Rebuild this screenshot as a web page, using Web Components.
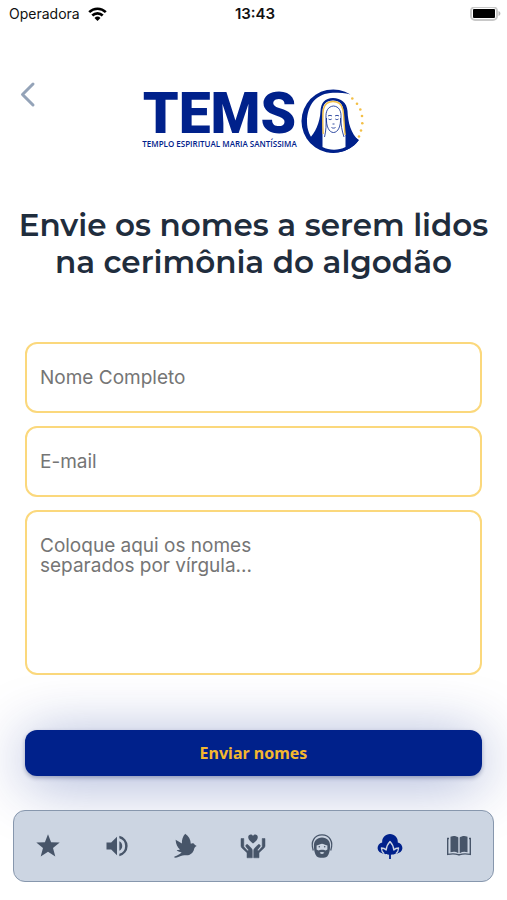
<!DOCTYPE html>
<html lang="pt-BR">
<head>
<meta charset="utf-8">
<meta name="viewport" content="width=device-width, initial-scale=1">
<title>TEMS - Enviar nomes</title>
<style>
  body {
    margin: 0;
    background: #fff;
    font-family: Inter, "Liberation Sans", sans-serif;
  }
</style>
</head>
<body>
<tems-app>
  <status-bar slot="status" carrier="Operadora" time="13:43"></status-bar>
  <app-header slot="header"></app-header>
  <names-form>Envie os nomes a serem lidos na cerimônia do algodão</names-form>
  <tab-bar slot="tabs">
    <tab-item icon="star" label="Favoritos"></tab-item>
    <tab-item icon="sound" label="Áudios"></tab-item>
    <tab-item icon="dove" label="Orações"></tab-item>
    <tab-item icon="hands" label="Doações"></tab-item>
    <tab-item icon="saint" label="Mentores"></tab-item>
    <tab-item icon="cotton" label="Algodão" active></tab-item>
    <tab-item icon="book" label="Leituras"></tab-item>
  </tab-bar>
</tems-app>

<script>
const HAND = 'M2 6.500h2.800v8.200l3.800 4.200 1-1-2.600-3.200c-1-1.400.7-3 2-1.900l3.400 3.500c.6.600.9 1.300.9 2.200v7.300H8v-5l-5-4.700c-.7-.7-1-1.400-1-2.300z';

const ICONS = {
  star: `<path d="M14 2.200l3.100 8 8.600.4-6.700 5.400 2.300 8.500L14 19.800l-7.300 4.700L9 16l-6.700-5.400 8.600-.4z"/>`,
  sound: `<path transform="scale(1.1667)" d="M14 3.200v2.100a7 7 0 0 1 0 13.400v2.100A9 9 0 0 0 14 3.200M16.500 12c0-1.800-1-3.300-2.500-4v8c1.500-.7 2.500-2.200 2.500-4M3 9v6h4l5 5V4L7 9z"/>`,
  dove: `<path d="M14.200 1.800c3.600 2.400 5.400 5.900 5.600 10 1.200-1 3-.9 3.900.9l2 1.200c-1.500.6-2.200 1.600-2.600 3.100-.9 4.200-4.300 6.800-8.700 6.300-1.800-.2-3 .1-4.500.8-2 .9-4 1.700-6.200 1.500-.7-.1-.7-.9 0-1.100 2.600-.8 5-2.100 7-4.200-2.200.1-4-.8-5-2.200 1.400 0 2.400-.2 3.300-.7-2.500-1.900-4.100-5.200-4.400-9.700 1.900 1.400 4 2.300 6.300 3.700-.2-3.600.9-7 3.300-9.600z"/>`,
  hands: `<path d="M14 11.500C11.500 9.500 9.200 7.800 9.200 5.200c0-3 3.500-3.800 4.800-1.300 1.300-2.500 4.800-1.700 4.800 1.300 0 2.600-2.300 4.300-4.800 6.300z"/>
    <path stroke="currentColor" stroke-width=".5" d="${HAND}"/>
    <path stroke="currentColor" stroke-width=".5" transform="matrix(-1 0 0 1 28 0)" d="${HAND}"/>`,
  saint: `<path fill="none" stroke="currentColor" stroke-width="1.300" d="M5.300 18.500C2.200 9.500 6.500 2.900 14 2.900s11.800 6.600 8.700 15.600"/>
    <path fill-rule="evenodd" d="M14 5.600c-5.200 0-8.400 3.500-8.100 8.900.2 4 .8 7.700 2.900 9.900 1.700 1.900 8.700 1.900 10.400 0 2.100-2.200 2.700-5.900 2.900-9.900.3-5.400-2.900-8.900-8.100-8.900zM8.600 13.400c2.200-.2 4-1.600 5.400-1.600s3.200 1.400 5.400 1.600v4l-1.800 1.200c-1.200-1.300-5.700-1.300-7.200 0l-1.800-1.200zM11.700 20.600c1.400-.8 3.200-.8 4.600 0-.5 1.900-4.100 1.900-4.600 0z"/>
    <circle cx="11.300" cy="14.800" r=".8"/><circle cx="16.700" cy="14.800" r=".8"/>`,
  cotton: `<path d="M8.200 21.500C4.500 21.600 1.600 19.100 1.600 16c0-2.800 1.700-5 4.600-5.600C5.800 5.600 9.400 2 14 2s8.200 3.600 7.800 8.400c2.900.6 4.600 2.800 4.600 5.600 0 3.100-2.900 5.600-6.600 5.500-1.300.8-3 1.200-4.900 1.200V27h-1.800v-4.300c-1.900 0-3.600-.4-4.900-1.200z"/>
    <path fill="none" stroke="#ccd5e2" stroke-width="1.300" stroke-linejoin="round" d="M8 21.500c-1.700-1.200-2.500-3-2.600-5.500 1.900 0 3.500.6 4.800 2 .1-3.300 1.500-6 3.800-8.500 2.300 2.500 3.700 5.200 3.800 8.500 1.300-1.400 2.900-2 4.800-2-.1 2.500-.9 4.300-2.600 5.500"/>`,
  book: `<path d="M5.500 4.700c3-1.200 5.500-.9 7.800.8v15.800c-2.500-1.600-4.800-1.900-7.800-1zM22.500 4.700c-3-1.200-5.500-.9-7.800.8v15.800c2.500-1.600 4.800-1.900 7.800-1z"/>
    <path fill="none" stroke="currentColor" stroke-width="1.400" d="M4 6.500H2.700v15.900c3.400-.6 7.400-.8 10.500.3h1.600c3.100-1.100 7.100-.9 10.500-.3V6.500H24"/>`
};

class TemsApp extends HTMLElement {
  constructor() {
    super();
    this.attachShadow({ mode: 'open' });
    this.shadowRoot.innerHTML = `
      <style>
        :host {
          display: flex;
          flex-direction: column;
          min-height: 100vh;
        }
        main { flex: 1; padding: 0 25px; }
      </style>
      <slot name="status"></slot>
      <slot name="header"></slot>
      <main><slot></slot></main>
      <slot name="tabs"></slot>
    `;
  }
}

class StatusBar extends HTMLElement {
  connectedCallback() {
    this.attachShadow({ mode: 'open' });
    this.shadowRoot.innerHTML = `
      <style>
        :host {
          display: grid;
          grid-template-columns: 1fr auto 1fr;
          align-items: center;
          height: 28px;
          padding: 0 6px 0 9px;
          color: #111;
          font-size: 14px;
          line-height: 20px;
        }
        .carrier { display: flex; align-items: center; gap: 8px; }
        .time { font-size: 15px; font-weight: 600; }
        .battery { justify-self: end; }
        svg { display: block; }
      </style>
      <div class="carrier">
        <span>${this.getAttribute('carrier')}</span>
        <svg width="19" height="14" viewBox="0 0 19 14" fill="none" stroke="#000" stroke-width="2.600">
          <path d="M1.200 5.200a11.800 11.800 0 0 1 16.600 0M4.300 8.500a7.400 7.400 0 0 1 10.400 0"/>
          <path fill="#000" stroke="none" d="M9.500 14l-3-3a4.300 4.300 0 0 1 6 0z"/>
        </svg>
      </div>
      <div class="time">${this.getAttribute('time')}</div>
      <svg class="battery" width="31" height="15" viewBox="0 0 31 15">
        <rect x="1" y="0" width="26" height="13" rx="4" fill="#fff" stroke="#c8c8c8" stroke-width="2"/>
        <rect x="3" y="2" width="22" height="9" rx="1"/>
        <path d="M28.500 4c2.500 1 2.500 4 0 5z" fill="#b5b5b5"/>
      </svg>
    `;
  }
}

class AppHeader extends HTMLElement {
  constructor() {
    super();
    this.attachShadow({ mode: 'open' });
    this.shadowRoot.innerHTML = `
      <style>
        :host {
          display: grid;
          grid-template-columns: 1fr auto 1fr;
          align-items: start;
          padding: 61px 14px 0;
        }
        button {
          width: 28px;
          height: 32px;
          margin-top: -11px;
          padding: 0;
          border: 0;
          background: none;
        }
        svg { display: block; overflow: visible; }
        .logo { display: flex; gap: 6px; color: #00218b; }
        .words { display: flex; flex-direction: column; align-items: center; width: 152px; }
        .name {
          font: 900 57px/50px Roboto, sans-serif;
          white-space: nowrap;
        }
        .tag {
          font: 600 8px/10px "Open Sans", sans-serif;
          white-space: nowrap;
        }
      </style>
      <button type="button" aria-label="Voltar">
        <svg width="28" height="32" viewBox="0 0 28 32" fill="none" stroke="#94a3b8" stroke-width="3" stroke-linecap="round" stroke-linejoin="round">
          <path d="M19 6L8.500 16.500 19 27"/>
        </svg>
      </button>
      <div class="logo">
        <div class="words">
          <span class="name">TEMS</span>
          <span class="tag">TEMPLO ESPIRITUAL MARIA SANTÍSSIMA</span>
        </div>
        <svg width="62" height="65" viewBox="0 0 62 65" fill="none">
          <!-- ring, open on the right side -->
          <path fill="#00218b" d="M48.500 5.500A31.800 31.800 0 1 0 57 51L51 47a27 27 0 0 1-7 10.500C25 68 5 53 5 33 5 15 15 4.200 31 3.700c7 0 12 .2 17.500 1.800z"/>
          <!-- veil -->
          <path fill="#00218b" d="M31 9C23 9 19 14 18.500 22 18 34 13 44 7 50c5.500 8 14.500 13.500 25 13.500 10 0 19-4.500 24.500-12C49 44 46 34 45.500 22 45 14 39 9 31 9z"/>
          <path fill="#fff" d="M20.500 47.500V23c0-8 4-11.500 10.500-11.500S41 15 41.500 23c.3 9 .8 17 2 24.500V58c-7 3.500-16 3.500-23 0z"/>
          <path stroke="#f3bf46" stroke-width="1.400" d="M21.200 45c-.5-10-.8-19 .3-25 1.200-5 4.700-7.500 9.500-7.500s8.500 2.500 9.700 7.500c1.500 6 1 15 2.500 26"/>
          <path stroke="#00218b" stroke-width=".8" d="M31.500 17c-5.500.5-8 5-7.500 12 .2 7 .2 12-1.500 19m9-31c5.500.5 8 5 7.500 12-.2 7 .8 12 3 19M24.500 29c-.5 8 2.500 14.500 7 14.500S39 37 38.500 29"/>
          <path stroke="#00218b" stroke-width=".8" d="M26 27c1.200-.8 2.800-.8 4 0m3 0c1.200-.8 2.800-.8 4 0M26.500 30c1 .8 2.200.8 3.200 0m3.600 0c1 .8 2.200.8 3.200 0M30.500 35h2M29.500 38.500c1.200.8 2.800.8 4 0"/>
          <g fill="#f3bf46">
            <circle cx="50.300" cy="9.500" r="1.300"/><circle cx="55" cy="14.700" r="1.300"/>
            <circle cx="58.300" cy="20.500" r="1.300"/><circle cx="60" cy="27" r="1.300"/>
            <circle cx="60.300" cy="34.300" r="1.300"/><circle cx="59" cy="41.500" r="1.300"/>
            <circle cx="57" cy="47.500" r="1.300"/>
          </g>
        </svg>
      </div>
    `;
  }
}

class NamesForm extends HTMLElement {
  constructor() {
    super();
    this.attachShadow({ mode: 'open' });
    this.shadowRoot.innerHTML = `
      <style>
        :host { display: block; padding-top: 53px; }
        h1 {
          margin: 0 -16px 61px;
          color: #1f2d3d;
          font: 600 31px/37px Montserrat, Inter, sans-serif;
          text-align: center;
        }
        form { display: flex; flex-direction: column; gap: 13px; }
        input, textarea {
          box-sizing: border-box;
          display: block;
          width: 100%;
          margin: 0;
          padding: 0 13px;
          border: 2px solid #fbd87c;
          border-radius: 12px;
          outline: 0;
          background: #fff;
          color: #333;
          font: 400 19px/20px Inter, sans-serif;
        }
        input { height: 71px; }
        textarea { height: 165px; padding: 24px 13px; resize: none; overflow: hidden; }
        ::placeholder { color: #757575; opacity: 1; }
        button {
          height: 46px;
          margin-top: 42px;
          border: 0;
          border-radius: 12px;
          background: #00218b;
          box-shadow: 0 2px 4px rgba(0, 20, 80, 0.3), 0 7px 60px rgba(0, 33, 139, 0.38);
          color: #f3b72f;
          font: 700 16px/20px "Noto Sans", sans-serif;
        }
      </style>
      <h1><slot></slot></h1>
      <form>
        <input type="text" name="nome" aria-label="Nome Completo" placeholder="Nome Completo">
        <input type="email" name="email" aria-label="E-mail" placeholder="E-mail">
        <textarea name="nomes" aria-label="Nomes" placeholder="Coloque aqui os nomes&#10;separados por vírgula..."></textarea>
        <button type="submit">Enviar nomes</button>
      </form>
    `;
    this.shadowRoot.querySelector('form').addEventListener('submit', (e) => e.preventDefault());
  }
}

class TabBar extends HTMLElement {
  constructor() {
    super();
    this.attachShadow({ mode: 'open' });
    this.shadowRoot.innerHTML = `
      <style>
        :host { display: block; padding: 0 13px 18px; }
        nav {
          display: flex;
          height: 70px;
          border: 1px solid #8797ad;
          border-radius: 12px;
          background: #ccd5e2;
        }
      </style>
      <nav><slot></slot></nav>
    `;
  }
}

class TabItem extends HTMLElement {
  connectedCallback() {
    this.attachShadow({ mode: 'open' });
    this.shadowRoot.innerHTML = `
      <style>
        :host { display: flex; flex: 1; color: #475569; }
        :host([active]) { color: #00218b; }
        a {
          display: flex;
          flex: 1;
          align-items: center;
          justify-content: center;
          color: inherit;
        }
      </style>
      <a href="#${this.getAttribute('icon')}" aria-label="${this.getAttribute('label')}">
        <svg width="28" height="28" viewBox="0 0 28 28" fill="currentColor">${ICONS[this.getAttribute('icon')]}</svg>
      </a>
    `;
  }
}

customElements.define('tems-app', TemsApp);
customElements.define('status-bar', StatusBar);
customElements.define('app-header', AppHeader);
customElements.define('names-form', NamesForm);
customElements.define('tab-bar', TabBar);
customElements.define('tab-item', TabItem);
</script>
</body>
</html>
